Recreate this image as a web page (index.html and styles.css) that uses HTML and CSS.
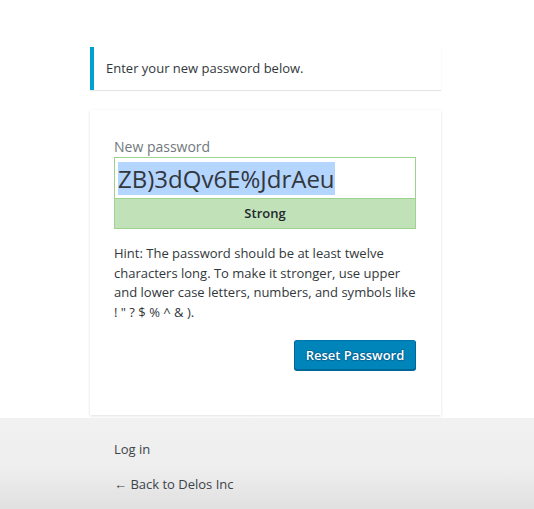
FILE: index.html
```html
<!DOCTYPE html>
<html lang="en">
<head>
<meta charset="utf-8">
<title>Reset Password</title>
<link rel="stylesheet" href="styles.css">
</head>
<body>
<div class="top">
  <div class="login">
    <p class="message">Enter your new password below.</p>
    <form class="card">
      <label class="label">New password</label>
      <div class="pass-field"><span class="selected">ZB)3dQv6E%JdrAeu</span></div>
      <div class="meter">Strong</div>
      <p class="hint">Hint: The password should be at least twelve characters long. To make it stronger, use upper and lower case letters, numbers, and symbols like ! " ? $ % ^ &amp; ).</p>
      <div class="submit"><button type="button" class="button">Reset Password</button></div>
    </form>
  </div>
</div>
<div class="bottom">
  <div class="login links">
    <a class="link" href="#">Log in</a>
    <a class="link" href="#">&larr; Back to Delos Inc</a>
  </div>
</div>
</body>
</html>
```

FILE: styles.css
```css
html, body {
  margin: 0;
  padding: 0;
}
body {
  font-family: "Open Sans", "Noto Sans", sans-serif;
  color: #444;
  background: #fff;
  height: 509px;
  display: flex;
  flex-direction: column;
}
.top {
  background: #fff;
  padding-top: 47px;
  height: 418px;
  flex: none;
  box-sizing: border-box;
}
.login {
  width: 351px;
  margin-left: 90px;
}
.message {
  margin: 0;
  border-left: 4px solid #00a0d2;
  background: #fff;
  box-shadow: 0 1px 1px 0 rgba(0,0,0,.1);
  padding: 12px 12px 12px 12px;
  font-size: 13px;
  line-height: 19px;
  height: 43px;
  box-sizing: border-box;
  color: #32373c;
}
.card {
  margin-top: 20px;
  background: #fff;
  box-shadow: 0 1px 3px rgba(0,0,0,.13);
  padding: 28px 25px 0 24px;
  height: 305px;
  box-sizing: border-box;
}
.label {
  display: block;
  font-size: 14px;
  line-height: 18px;
  color: #72777c;
}
.pass-field {
  margin-top: 1px;
  height: 41px;
  box-sizing: border-box;
  border: 1px solid #9dd38f;
  border-bottom: none;
  padding: 6px 3px 0 3px;
  font-size: 24px;
  line-height: 30px;
  color: #32373c;
  white-space: nowrap;
}
.selected {
  background: #b4d5fe;
}
.meter {
  height: 31px;
  box-sizing: border-box;
  background: #c1e1b9;
  border: 1px solid #9dd38f;
  text-align: center;
  font-size: 13px;
  font-weight: 600;
  line-height: 29px;
  color: #23282d;
}
.hint {
  margin: 15px 0 0 0;
  font-size: 13px;
  line-height: 19.5px;
  color: #32373c;
}
.submit {
  display: flex;
  justify-content: flex-end;
  margin-top: 18px;
}
.button {
  width: 122px;
  height: 30px;
  box-sizing: border-box;
  background: #0085ba;
  border: 1px solid #0073aa;
  border-color: #0073aa #006799 #006799;
  border-radius: 3px;
  box-shadow: 0 1px 0 #006799;
  color: #fff;
  font-family: "Open Sans", "Noto Sans", sans-serif;
  font-size: 13px;
  font-weight: 600;
  text-shadow: 0 -1px 1px #006799, 1px 0 1px #006799, 0 1px 1px #006799, -1px 0 1px #006799;
  padding: 0;
}
.bottom {
  flex: 1;
  background: linear-gradient(#f1f1f1 0%, #eeeeee 55%, #e0e0e0 100%);
  padding-top: 22px;
}
.links {
  display: flex;
  flex-direction: column;
  gap: 16px;
  padding-left: 24px;
  box-sizing: border-box;
}
.link {
  font-size: 13px;
  line-height: 19px;
  color: #3c434a;
  text-decoration: none;
}
```
